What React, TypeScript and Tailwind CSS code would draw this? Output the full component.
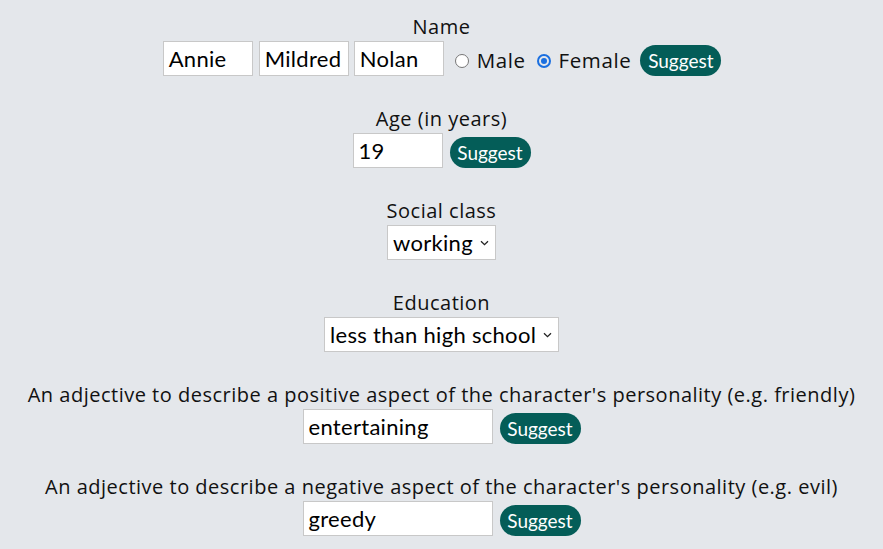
import React from "react";

const labelFont = { fontFamily: "'Open Sans', sans-serif" };

function Label({ children }: { children: React.ReactNode }) {
  return (
    <div className="text-center text-[20px] tracking-[0.5px] leading-[29px] text-[#111]" style={labelFont}>
      {children}
    </div>
  );
}

function TextBox({ value, w }: { value: string; w: string }) {
  return (
    <div className={`${w} h-[35px] bg-white border border-[#c8c8c8] flex items-center px-[5px] text-[22px] tracking-[0.3px] text-black font-['Lato',sans-serif] leading-none`}>
      {value}
    </div>
  );
}

function Suggest() {
  return (
    <button className="h-[31px] w-[81px] rounded-full bg-[#045d58] text-white text-[19px] leading-none font-['Lato',sans-serif] flex items-center justify-center pb-[1px]">
      Suggest
    </button>
  );
}

function Chevron() {
  return (
    <svg width="9" height="6" viewBox="0 0 9 6" className="ml-auto">
      <path d="M1 1.2 L4.5 4.6 L8 1.2" fill="none" stroke="#222" strokeWidth="1.3" />
    </svg>
  );
}

function SelectBox({ value, w }: { value: string; w: string }) {
  return (
    <div className={`${w} h-[35px] bg-white border border-[#c8c8c8] flex items-center pl-[5px] pr-[6px] text-[22px] tracking-[0.3px] text-black font-['Lato',sans-serif] leading-none`}>
      <span>{value}</span>
      <Chevron />
    </div>
  );
}

function Radio({ checked }: { checked?: boolean }) {
  return checked ? (
    <span className="w-[14px] h-[14px] rounded-full border-[2px] border-[#1a6fe0] flex items-center justify-center">
      <span className="w-[6px] h-[6px] rounded-full bg-[#1a6fe0]" />
    </span>
  ) : (
    <span className="w-[14px] h-[14px] rounded-full border-[1.5px] border-[#777] bg-white" />
  );
}

export default function App() {
  return (
    <div className="w-[883px] h-[549px] bg-[#e4e7eb] pt-[12px] flex flex-col items-center overflow-hidden">
      <Label>Name</Label>
      <div className="flex items-end h-[35px] ml-[1px]">
        <TextBox value="Annie" w="w-[90px]" />
        <div className="w-[6px]" />
        <TextBox value="Mildred" w="w-[90px]" />
        <div className="w-[5px]" />
        <TextBox value="Nolan" w="w-[90px]" />
        <div className="self-center flex items-center ml-[11px] mt-[4px] text-[20.5px] tracking-[0.6px] text-[#111]" style={labelFont}>
          <Radio />
          <span className="ml-[8px]">Male</span>
          <span className="ml-[11px]"><Radio checked /></span>
          <span className="ml-[8px]">Female</span>
        </div>
        <div className="ml-[9px]"><Suggest /></div>
      </div>

      <div className="mt-[28px]"><Label>Age (in years)</Label></div>
      <div className="flex items-end h-[35px]">
        <TextBox value="19" w="w-[90px]" />
        <div className="ml-[7px]"><Suggest /></div>
      </div>

      <div className="mt-[28px]"><Label>Social class</Label></div>
      <SelectBox value="working" w="w-[109px]" />

      <div className="mt-[28px]"><Label>Education</Label></div>
      <SelectBox value="less than high school" w="w-[235px]" />

      <div className="mt-[28px]"><Label>An adjective to describe a positive aspect of the character's personality (e.g. friendly)</Label></div>
      <div className="flex items-end h-[35px]">
        <TextBox value="entertaining" w="w-[190px]" />
        <div className="ml-[7px]"><Suggest /></div>
      </div>

      <div className="mt-[28px]"><Label>An adjective to describe a negative aspect of the character's personality (e.g. evil)</Label></div>
      <div className="flex items-end h-[35px]">
        <TextBox value="greedy" w="w-[190px]" />
        <div className="ml-[7px]"><Suggest /></div>
      </div>
    </div>
  );
}
